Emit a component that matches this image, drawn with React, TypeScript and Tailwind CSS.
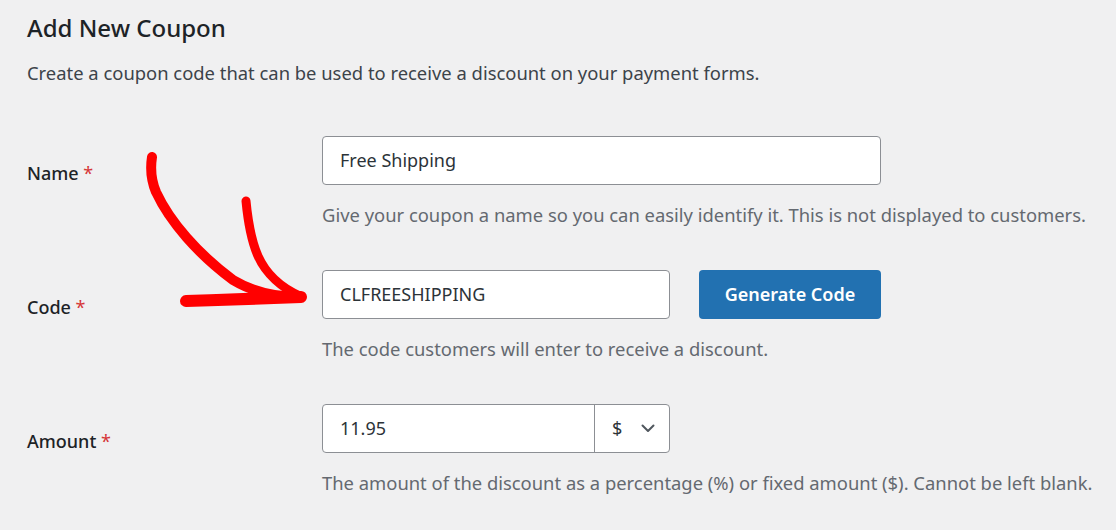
import React from 'react';

const FONT = "font-['Noto_Sans','Liberation_Sans',sans-serif]";

function Row({ label, help, children }: { label: string; help: string; children: React.ReactNode }) {
  return (
    <div className="flex h-[134px]">
      <div className="w-[295px] shrink-0 pt-[23px]">
        <span className="text-[18px] leading-[28px] font-medium text-[#1d2327]">
          {label} <span className="text-[#d63638] font-normal">*</span>
        </span>
      </div>
      <div className="flex flex-col">
        {children}
        <p className="mt-[16px] text-[18.4px] text-[#646970] leading-[28px]">{help}</p>
      </div>
    </div>
  );
}

// hand-drawn red arrow pointing at the code field
function RedArrow() {
  return (
    <svg className="absolute left-0 top-0 pointer-events-none" width="340" height="340" viewBox="0 0 340 340">
      <g fill="none" stroke="#ff0000" strokeLinecap="round" strokeLinejoin="round">
        <path d="M152 157 C150 170 151 180 156 192 C170 222 198 254 233 280 C253 292 278 297 300 297" strokeWidth="10" />
        <path d="M246 201 C248 222 251 240 258 256 C266 274 282 288 300 296" strokeWidth="9" />
        <path d="M186 301 C225 300 265 298 301 297" strokeWidth="12" />
      </g>
    </svg>
  );
}

export default function App() {
  return (
    <div className={`${FONT} relative w-[1116px] h-[530px] overflow-hidden bg-[#f0f0f1] pl-[27px] pt-[12px]`}>
      <h1 className="text-[24px] font-medium text-[#1d2327] leading-[32px]">Add New Coupon</h1>
      <p className="mt-[15px] text-[18.4px] text-[#3c434a] leading-[28px]">
        Create a coupon code that can be used to receive a discount on your payment forms.
      </p>

      <div className="mt-[49px] flex flex-col">
        <Row label="Name" help="Give your coupon a name so you can easily identify it. This is not displayed to customers.">
          <div className="w-[559px] h-[49px] bg-white border border-[#8c8f94] rounded-[4px] flex items-center px-[17px] text-[18px] text-[#2c3338]">
            Free Shipping
          </div>
        </Row>
        <Row label="Code" help="The code customers will enter to receive a discount.">
          <div className="flex gap-[29px]">
            <div className="w-[348px] h-[49px] bg-white border border-[#8c8f94] rounded-[4px] flex items-center px-[17px] text-[18px] text-[#2c3338]">
              CLFREESHIPPING
            </div>
            <button className="w-[182px] h-[49px] bg-[#2271b1] rounded-[4px] text-white text-[18px] font-semibold">
              Generate Code
            </button>
          </div>
        </Row>
        <Row label="Amount" help="The amount of the discount as a percentage (%) or fixed amount ($). Cannot be left blank.">
          <div className="w-[348px] h-[49px] bg-white border border-[#8c8f94] rounded-[4px] flex text-[18px] text-[#2c3338]">
            <div className="flex-1 flex items-center px-[17px]">11.95</div>
            <div className="w-[75px] border-l border-[#8c8f94] flex items-center justify-between pl-[17px] pr-[14px]">
              <span>$</span>
              <svg width="14" height="9" viewBox="0 0 14 9" fill="none" stroke="#50575e" strokeWidth="2" strokeLinecap="round" strokeLinejoin="round">
                <path d="M1.5 1.5 L7 7 L12.5 1.5" />
              </svg>
            </div>
          </div>
        </Row>
      </div>

      <RedArrow />
    </div>
  );
}
